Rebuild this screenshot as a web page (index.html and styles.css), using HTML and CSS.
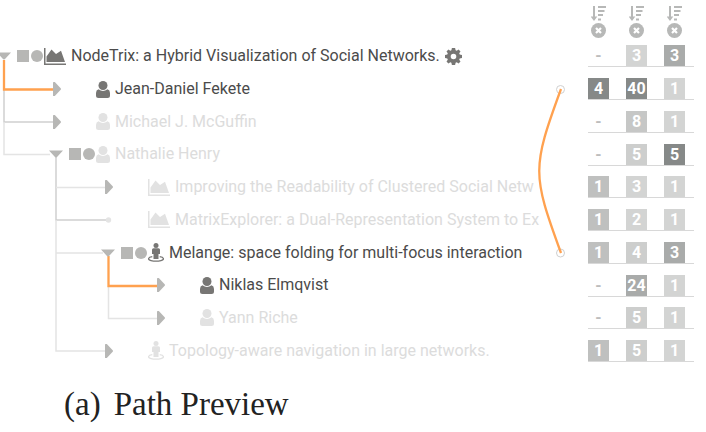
FILE: index.html
```
<!DOCTYPE html>
<html lang="en">
<head>
<meta charset="utf-8">
<title>Path Preview</title>
<link rel="stylesheet" href="styles.css">
</head>
<body>
<svg class="defs" aria-hidden="true">
  <symbol id="closed" viewBox="0 0 17 16"><path d="M1 1.600Q1 1 1.600 1H2.800L8.700 7.200Q9.400 8 8.700 8.800L2.800 15H1.600Q1 15 1 14.400Z"/></symbol>
  <symbol id="chart" viewBox="0 0 22 17"><path d="M0 0H1.500V15.500H22V17H0ZM2.500 14V8.500L7.500 1.500 12 6 17 2.800 21 14Z"/></symbol>
  <symbol id="user" viewBox="0 0 14 17"><circle cx="7" cy="4.500" r="4.500"/><path d="M2.500 8.300Q7 11.500 11.500 8.300Q14 9 14 12V14.500Q14 17 11.500 17H2.500Q0 17 0 14.500V12Q0 9 2.500 8.300Z"/></symbol>
  <symbol id="place" viewBox="0 0 16 19"><circle cx="8" cy="2.500" r="2.500"/><path d="M5.500 5.300H10.500Q12 5.300 12 6.800V11H10.500V16H5.500V11H4V6.800Q4 5.300 5.500 5.300Z"/><path d="M4.300 13.700C-.5 14.500-.5 16.700 3 17.600Q8 18.800 13 17.600C16.500 16.700 16.500 14.500 11.700 13.700" fill="none" stroke="currentColor" stroke-width="1.300"/></symbol>
  <symbol id="sort" viewBox="0 0 15 15"><path d="M2 0H4V10.500H6.300L3 15 -.3 10.500H2ZM7 0H15V2H7ZM7 4H13.500V6H7ZM7 8H12V10H7ZM7 12.500H10V14.500H7Z"/></symbol>
  <symbol id="remove" viewBox="0 0 15 15"><circle cx="7.500" cy="7.500" r="7.500"/><path d="M5 5 10 10M10 5 5 10" stroke="#fff" stroke-width="2.200"/></symbol>
</svg>
<figure class="figure">
  <div class="view">
    <div class="tree">
      <svg class="links" width="180" height="367" aria-hidden="true">
        <path class="link" d="M4 60V122H54M56 157V220H107"/>
        <path class="link faint" d="M4 122V154.500H50M56 220V253H103M56 187.500H105M56 253V351H105M108.500 286V318.500H158"/>
        <circle class="leaf" cx="108.500" cy="220" r="2.700"/>
        <path class="path" d="M4 60V89.500H54M108.500 256V286H158"/>
      </svg>
      <ul class="rows">
        <li class="row"><button class="toggle" aria-label="Collapse"><svg width="17" height="16"><path d="M-3 4.500H11L5.500 10.500Q4 12.500 2.500 10.500Z"/></svg></button><span class="tools"><i class="square"></i><i class="dot"></i></span><svg class="icon" width="22" height="17"><use href="#chart"/></svg><span class="label">NodeTrix: a Hybrid Visualization of Social Networks.</span><button class="toggle gear" aria-label="Settings"><svg width="17" height="17" viewBox="-8.5 -8.5 17 17"><path fill-rule="evenodd" d="M-1.600-8.500H1.600L2.100-6.200 3.200-5.700 5.100-7 7-5.100 5.700-3.200 6.200-2.100 8.500-1.600V1.600L6.200 2.100 5.700 3.200 7 5.100 5.100 7 3.200 5.700 2.100 6.200 1.600 8.500H-1.600L-2.100 6.200-3.200 5.700-5.100 7-7 5.100-5.700 3.200-6.200 2.100-8.500 1.600V-1.600L-6.200-2.100-5.700-3.200-7-5.100-5.100-7-3.200-5.700-2.100-6.200ZM-2.800 0A2.800 2.800 0 0 0 2.800 0A2.800 2.800 0 0 0-2.800 0Z"/></svg></button></li>
        <li class="row d1"><button class="toggle" aria-label="Expand"><svg width="17" height="16"><use href="#closed"/></svg></button><span class="tools"></span><svg class="icon" width="14" height="17"><use href="#user"/></svg><span class="label">Jean-Daniel Fekete</span></li>
        <li class="row d1 dim"><button class="toggle" aria-label="Expand"><svg width="17" height="16"><use href="#closed"/></svg></button><span class="tools"></span><svg class="icon" width="14" height="17"><use href="#user"/></svg><span class="label">Michael J. McGuffin</span></li>
        <li class="row d1 dim"><button class="toggle" aria-label="Collapse"><svg width="17" height="16"><path d="M-3 4.500H11L5.500 10.500Q4 12.500 2.500 10.500Z"/></svg></button><span class="tools"><i class="square"></i><i class="dot"></i></span><svg class="icon" width="14" height="17"><use href="#user"/></svg><span class="label">Nathalie Henry</span></li>
        <li class="row d2 dim"><button class="toggle" aria-label="Expand"><svg width="17" height="16"><use href="#closed"/></svg></button><span class="tools"></span><svg class="icon" width="22" height="17"><use href="#chart"/></svg><span class="label">Improving the Readability of Clustered Social Netw</span></li>
        <li class="row d2 dim"><span class="toggle"></span><span class="tools"></span><svg class="icon" width="22" height="17"><use href="#chart"/></svg><span class="label">MatrixExplorer: a Dual-Representation System to Ex</span></li>
        <li class="row d2"><button class="toggle" aria-label="Collapse"><svg width="17" height="16"><path d="M-3 4.500H11L5.500 10.500Q4 12.500 2.500 10.500Z"/></svg></button><span class="tools"><i class="square"></i><i class="dot"></i></span><svg class="icon" width="16" height="19"><use href="#place"/></svg><span class="label">Melange: space folding for multi-focus interaction</span></li>
        <li class="row d3"><button class="toggle" aria-label="Expand"><svg width="17" height="16"><use href="#closed"/></svg></button><span class="tools"></span><svg class="icon" width="14" height="17"><use href="#user"/></svg><span class="label">Niklas Elmqvist</span></li>
        <li class="row d3 dim"><button class="toggle" aria-label="Expand"><svg width="17" height="16"><use href="#closed"/></svg></button><span class="tools"></span><svg class="icon" width="14" height="17"><use href="#user"/></svg><span class="label">Yann Riche</span></li>
        <li class="row d2 dim"><button class="toggle" aria-label="Expand"><svg width="17" height="16"><use href="#closed"/></svg></button><span class="tools"></span><svg class="icon" width="16" height="19"><use href="#place"/></svg><span class="label">Topology-aware navigation in large networks.</span></li>
      </ul>
    </div>
    <svg class="arc" width="52" height="367" viewBox="536 0 52 367" aria-hidden="true">
      <circle class="end" cx="560.500" cy="89.500" r="4"/><circle class="end" cx="560.500" cy="253" r="4"/>
      <path class="path" d="M561 89C532 168 532 174 561 253"/>
    </svg>
    <table class="matrix">
      <thead><tr>
        <th><button aria-label="Sort"><svg width="15" height="15"><use href="#sort"/></svg></button><button aria-label="Remove"><svg width="15" height="15"><use href="#remove"/></svg></button></th>
        <th><button aria-label="Sort"><svg width="15" height="15"><use href="#sort"/></svg></button><button aria-label="Remove"><svg width="15" height="15"><use href="#remove"/></svg></button></th>
        <th><button aria-label="Sort"><svg width="15" height="15"><use href="#sort"/></svg></button><button aria-label="Remove"><svg width="15" height="15"><use href="#remove"/></svg></button></th>
      </tr></thead>
      <tbody>
        <tr><td><b class="none">-</b></td><td><b>3</b></td><td><b class="s4">3</b></td></tr>
        <tr><td><b class="s5">4</b></td><td><b class="s5">40</b></td><td><b>1</b></td></tr>
        <tr><td><b class="none">-</b></td><td><b class="s2">8</b></td><td><b>1</b></td></tr>
        <tr><td><b class="none">-</b></td><td><b class="s1">5</b></td><td><b class="s5">5</b></td></tr>
        <tr><td><b class="s3">1</b></td><td><b>3</b></td><td><b>1</b></td></tr>
        <tr><td><b class="s3">1</b></td><td><b>2</b></td><td><b>1</b></td></tr>
        <tr><td><b class="s3">1</b></td><td><b class="s1">4</b></td><td><b class="s4">3</b></td></tr>
        <tr><td><b class="none">-</b></td><td><b class="s4">24</b></td><td><b>1</b></td></tr>
        <tr><td><b class="none">-</b></td><td><b class="s1">5</b></td><td><b>1</b></td></tr>
        <tr><td><b class="s3">1</b></td><td><b class="s1">5</b></td><td><b>1</b></td></tr>
      </tbody>
    </table>
  </div>
  <figcaption class="caption"><span>(a)</span><span>Path Preview</span></figcaption>
</figure>
</body>
</html>
```
FILE: styles.css
```
body { margin: 0; background: #fff; color: #4b4b4b; font-family: Roboto, sans-serif; }
button { padding: 0; border: 0; background: none; color: inherit; font: inherit; }
svg { display: block; flex: none; overflow: visible; fill: currentColor; }
.defs { position: absolute; width: 0; height: 0; }
.figure { margin: 0; }
.view { display: flex; align-items: flex-start; padding-right: 12px; }
.tree { position: relative; flex: 1; min-width: 0; padding-top: 40px; }
.links { position: absolute; left: 0; top: 0; }
.link, .path { fill: none; stroke: #cfcfcf; stroke-width: 1.5; }
.faint { stroke: #e4e4e4; }
.leaf { fill: #e4e4e4; }
.path { stroke: #ffa14f; stroke-width: 2.3; }
.end { fill: #fff; stroke: #d0d0d0; }
.rows { position: relative; display: grid; grid-auto-rows: 1fr; height: 327px; margin: 0; padding: 0; list-style: none; }
.row { display: flex; align-items: center; font-size: 16px; line-height: 24px; white-space: nowrap; }
.d1 { padding-left: 52px; }
.d2 { padding-left: 104px; }
.d3 { padding-left: 156px; }
.toggle { flex: none; width: 17px; color: #b7b7b5; }
.tools { display: flex; flex: none; gap: 2px; width: 27px; color: #b7b7b5; }
.square, .dot { width: 12px; height: 12px; background: currentColor; }
.dot { border-radius: 50%; }
.icon { margin-right: 5px; color: #777674; }
.gear { margin-left: 5px; color: #777674; }
.dim .icon { color: #e2e2e2; }
.dim .label { color: #dcdcdc; }
.matrix { flex: none; width: 106px; height: 362px; border-collapse: collapse; table-layout: fixed; }
.matrix thead tr { height: 35px; }
.matrix th { padding: 6px 0 0 3px; vertical-align: top; color: #b7b8b7; }
.matrix th button { display: block; }
.matrix th button + button { margin: 2px 0 -6px; }
.matrix th, .matrix td { width: 38px; box-sizing: border-box; }
.matrix th:last-child, .matrix td:last-child { width: 30px; }
.matrix td { padding: 0; vertical-align: bottom; border-bottom: 1px solid #d8d8d8; }
.matrix b { display: block; width: 21px; height: 21px; background: #d3d4d3; color: #fff; font-size: 16px; line-height: 22px; text-align: center; }
.matrix .s1 { background: #cdcecd; }
.matrix .s2 { background: #c6c7c6; }
.matrix .s3 { background: #bfc0bf; }
.matrix .s4 { background: #a9abaa; }
.matrix .s5 { background: #868988; }
.matrix .none { background: none; color: #bdbdbd; }
.caption { display: flex; gap: 13px; padding: 19px 64px; color: #222; font: 33px/36px "Liberation Serif", serif; }
```
